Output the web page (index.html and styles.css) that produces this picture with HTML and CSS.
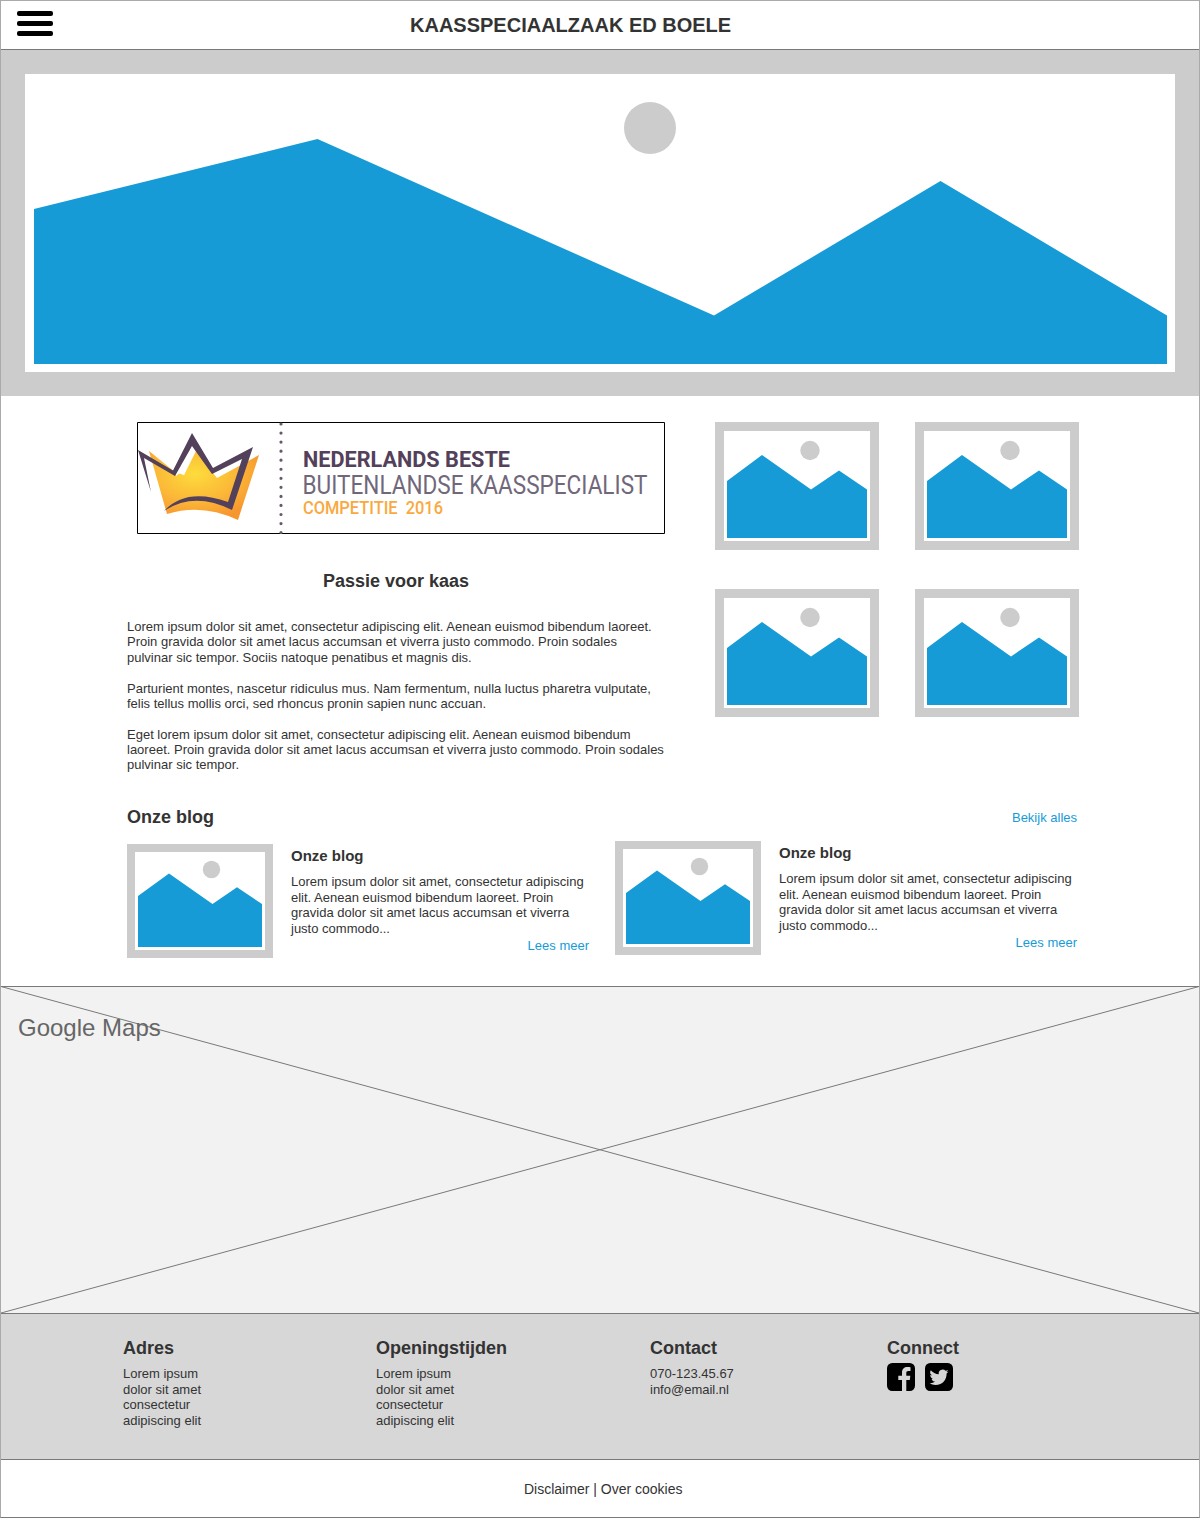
FILE: index.html
```html
<!DOCTYPE html>
<html lang="nl">
<head>
<meta charset="utf-8">
<title>Kaasspeciaalzaak Ed Boele</title>
<link rel="stylesheet" href="styles.css">
</head>
<body>
<svg width="0" height="0" class="defs" aria-hidden="true">
  <symbol id="photo" viewBox="0 0 164 128">
    <path fill="#ccc" d="M0 0h164v128H0z"/><path fill="#fff" d="M9 9h146v110H9z"/>
    <path fill="#169bd7" d="M12 59L47 33L96 67.5L124 48.5L152 67.5V116H12z"/>
    <circle cx="95" cy="28.5" r="9.7" fill="#ccc"/>
  </symbol>
  <symbol id="thumb" viewBox="0 0 146 114">
    <path fill="#ccc" d="M0 0h146v114H0z"/><path fill="#fff" d="M8 8h130v98H8z"/>
    <path fill="#169bd7" d="M11 52L42 29.5L85.5 60L110 43.3L135 60V103H11z"/>
    <circle cx="84.5" cy="25.5" r="8.7" fill="#ccc"/>
  </symbol>
</svg>
<div class="page">
  <header class="top">
    <div class="burger"><span></span><span></span><span></span></div>
    <h1>KAASSPECIAALZAAK ED BOELE</h1>
  </header>
  <svg class="hero" viewBox="0 0 1198 346">
    <path fill="#ccc" d="M0 0h1198v346H0z"/><path fill="#fff" d="M24 24h1150v298H24z"/>
    <path fill="#169bd7" d="M33 159L316.5 89L713 265.5L939.5 131L1166 265.5V314H33z"/>
    <circle cx="649" cy="78" r="26" fill="#ccc"/>
  </svg>
  <main>
    <section class="intro">
      <div class="story">
        <svg class="award" viewBox="0 0 528 112">
          <defs>
            <radialGradient id="gold" cx=".42" cy=".35" r=".65"><stop offset="0" stop-color="#fddc3c"/><stop offset=".6" stop-color="#fbb637"/><stop offset="1" stop-color="#f7962f"/></radialGradient>
          </defs>
          <path fill="#fff" stroke="#000" d="M.5.5h527v111H.5z"/>
          <path fill="url(#gold)" d="M12 29L38 50L47 53L58 27L80 56L122 33L101 98Q65 81 30 92Z"/>
          <path fill="#fff" d="M38 51L54 22L59 29L47 53L44 50L39 54Z"/>
          <path fill="#fff" d="M76 50L107 36L104 42L80 55Z"/>
          <path fill="#53405a" d="M1 28L36 48.500L55 11L76 46L116 25L95 88Q57 69 27 89Q49 65 91 80L105 37L75 52L55 24L38 54L7 36L14 70Z"/>
          <path d="M144 2V112" stroke="#655b68" stroke-width="3.2" stroke-linecap="round" stroke-dasharray="0 9.05"/>
          <g font-family="Roboto, sans-serif">
            <text x="166" y="45" font-size="22" font-weight="700" fill="#53405a" textLength="207" lengthAdjust="spacingAndGlyphs">NEDERLANDS BESTE</text>
            <text x="165.500" y="72" font-size="25" font-weight="400" fill="#71677a" textLength="345" lengthAdjust="spacingAndGlyphs">BUITENLANDSE KAASSPECIALIST</text>
            <text x="166" y="91.500" font-size="18.500" font-weight="500" fill="#f9a940" textLength="140" lengthAdjust="spacingAndGlyphs" xml:space="preserve">COMPETITIE  2016</text>
          </g>
        </svg>
        <h2>Passie voor kaas</h2>
        <p>Lorem ipsum dolor sit amet, consectetur adipiscing elit. Aenean euismod bibendum laoreet.<br>Proin gravida dolor sit amet lacus accumsan et viverra justo commodo. Proin sodales<br>pulvinar sic tempor. Sociis natoque penatibus et magnis dis.</p>
        <p>Parturient montes, nascetur ridiculus mus. Nam fermentum, nulla luctus pharetra vulputate,<br>felis tellus mollis orci, sed rhoncus pronin sapien nunc accuan.</p>
        <p>Eget lorem ipsum dolor sit amet, consectetur adipiscing elit. Aenean euismod bibendum<br>laoreet. Proin gravida dolor sit amet lacus accumsan et viverra justo commodo. Proin sodales<br>pulvinar sic tempor.</p>
      </div>
      <div class="gallery">
        <svg><use href="#photo"/></svg><svg><use href="#photo"/></svg>
        <svg><use href="#photo"/></svg><svg><use href="#photo"/></svg>
      </div>
    </section>
    <div class="blog-head"><h2>Onze blog</h2><a>Bekijk alles</a></div>
    <section class="blogs">
      <article class="lower">
        <svg><use href="#thumb"/></svg>
        <div><h3>Onze blog</h3><p>Lorem ipsum dolor sit amet, consectetur adipiscing<br>elit. Aenean euismod bibendum laoreet. Proin<br>gravida dolor sit amet lacus accumsan et viverra<br>justo commodo...</p><a>Lees meer</a></div>
      </article>
      <article>
        <svg><use href="#thumb"/></svg>
        <div><h3>Onze blog</h3><p>Lorem ipsum dolor sit amet, consectetur adipiscing<br>elit. Aenean euismod bibendum laoreet. Proin<br>gravida dolor sit amet lacus accumsan et viverra<br>justo commodo...</p><a>Lees meer</a></div>
      </article>
    </section>
  </main>
  <section class="map">
    <svg viewBox="0 0 1198 326" preserveAspectRatio="none"><path d="M0 -.5L1198 326M1198 -.5L0 326" stroke="#797979"/></svg>
    <span>Google Maps</span>
  </section>
  <footer>
    <div><h2>Adres</h2><p>Lorem ipsum<br>dolor sit amet<br>consectetur<br>adipiscing elit</p></div>
    <div><h2>Openingstijden</h2><p>Lorem ipsum<br>dolor sit amet<br>consectetur<br>adipiscing elit</p></div>
    <div><h2>Contact</h2><p>070-123.45.67<br>info@email.nl</p></div>
    <div><h2>Connect</h2>
      <div class="social">
        <svg viewBox="0 0 28 28"><rect width="28" height="28" rx="5.200"/><path fill="#d7d7d7" d="M15 28V17h-3.700v-4.200H15V9.600C15 6 17.200 4 20.500 4c1.500 0 2.600.1 3 .2V8h-2.100c-1.700 0-2.100.8-2.100 2v2.800h4L22.800 17h-3.500v11z"/></svg>
        <svg viewBox="0 0 28 28"><rect width="28" height="28" rx="5.200"/><path fill="#d7d7d7" d="M23.500 8.400c-.7.300-1.400.5-2.200.6.8-.5 1.400-1.200 1.700-2.100-.8.400-1.600.7-2.500.9a3.900 3.900 0 0 0-6.700 3.500c-3.200-.2-6.100-1.700-8-4.100a3.900 3.900 0 0 0 1.200 5.200c-.6 0-1.200-.2-1.800-.5 0 1.900 1.300 3.500 3.100 3.900-.6.100-1.200.2-1.700.1.500 1.500 1.900 2.700 3.600 2.700A7.900 7.900 0 0 1 4.500 20.200a11 11 0 0 0 6 1.800c7.300 0 11.300-6 11.100-11.600.7-.5 1.400-1.200 1.900-2z"/></svg>
      </div>
    </div>
  </footer>
  <div class="legal">Disclaimer | Over cookies</div>
</div>
</body>
</html>
```
FILE: styles.css
```css
* { box-sizing: border-box; margin: 0; padding: 0; }
body { background: #fff; color: #333; font: 13px/15.4px "Liberation Sans", Arial, sans-serif; }
svg { display: block; }
.defs { position: absolute; }
.page { width: 1200px; height: 1518px; border: 1px solid #aaa; border-bottom-color: #797979; }
.top { height: 49px; border-bottom: 1px solid #797979; display: flex; }
.burger { width: 36px; margin: 10px 0 0 16px; display: flex; flex-direction: column; gap: 5px; }
.burger span { height: 5px; border-radius: 2px; background: #000; }
h1 { font-size: 20px; line-height: 24px; margin: 12px 0 0 357px; white-space: nowrap; }
h2 { font-size: 18px; line-height: 20px; }
h3 { font-size: 15px; line-height: 18px; }
.hero { width: 1198px; height: 346px; }
main { height: 590px; padding: 26px 120px 0 126px; }
.intro { display: flex; justify-content: space-between; height: 385px; }
.story { width: 560px; }
.story h2 { width: 538px; text-align: center; margin: 37px 0 28px; }
.story p { margin-bottom: 15.3px; white-space: nowrap; }
.award { width: 528px; height: 112px; margin-left: 10px; }
.gallery { display: grid; grid-template-columns: 164px 164px; grid-auto-rows: 128px; gap: 39px 36px; align-content: start; }
.gallery svg { width: 164px; height: 128px; }
a { color: #169bd7; }
.blog-head { display: flex; justify-content: space-between; width: 950px; height: 20px; }
.blog-head a { padding-top: 3px; }
.blogs { display: flex; gap: 26px; margin-top: 14px; }
article { display: flex; gap: 18px; width: 462px; }
article.lower { margin-top: 3px; }
article svg { width: 146px; height: 114px; flex: none; }
article div { width: 298px; padding-top: 3px; display: flex; flex-direction: column; white-space: nowrap; }
article p { margin-top: 9px; line-height: 15.6px; }
article a { text-align: right; margin-top: 2px; }
.map { height: 328px; background: #f2f2f2; border: solid #797979; border-width: 1px 0; display: grid; }
.map > * { grid-area: 1 / 1; }
.map svg { width: 1198px; height: 326px; }
.map span { font-size: 24px; line-height: 28px; color: #666; padding: 27px 0 0 17px; }
footer { height: 146px; background: #d7d7d7; border-bottom: 1px solid #797979; display: grid; grid-template-columns: 253px 274px 237px auto; padding: 24px 0 0 122px; line-height: 15.6px; }
footer p { margin-top: 8px; }
.social { display: flex; gap: 10px; margin-top: 5px; }
.social svg { width: 28px; height: 28px; }
.legal { font-size: 14px; line-height: 16px; padding: 21px 0 0 523px; }
```
